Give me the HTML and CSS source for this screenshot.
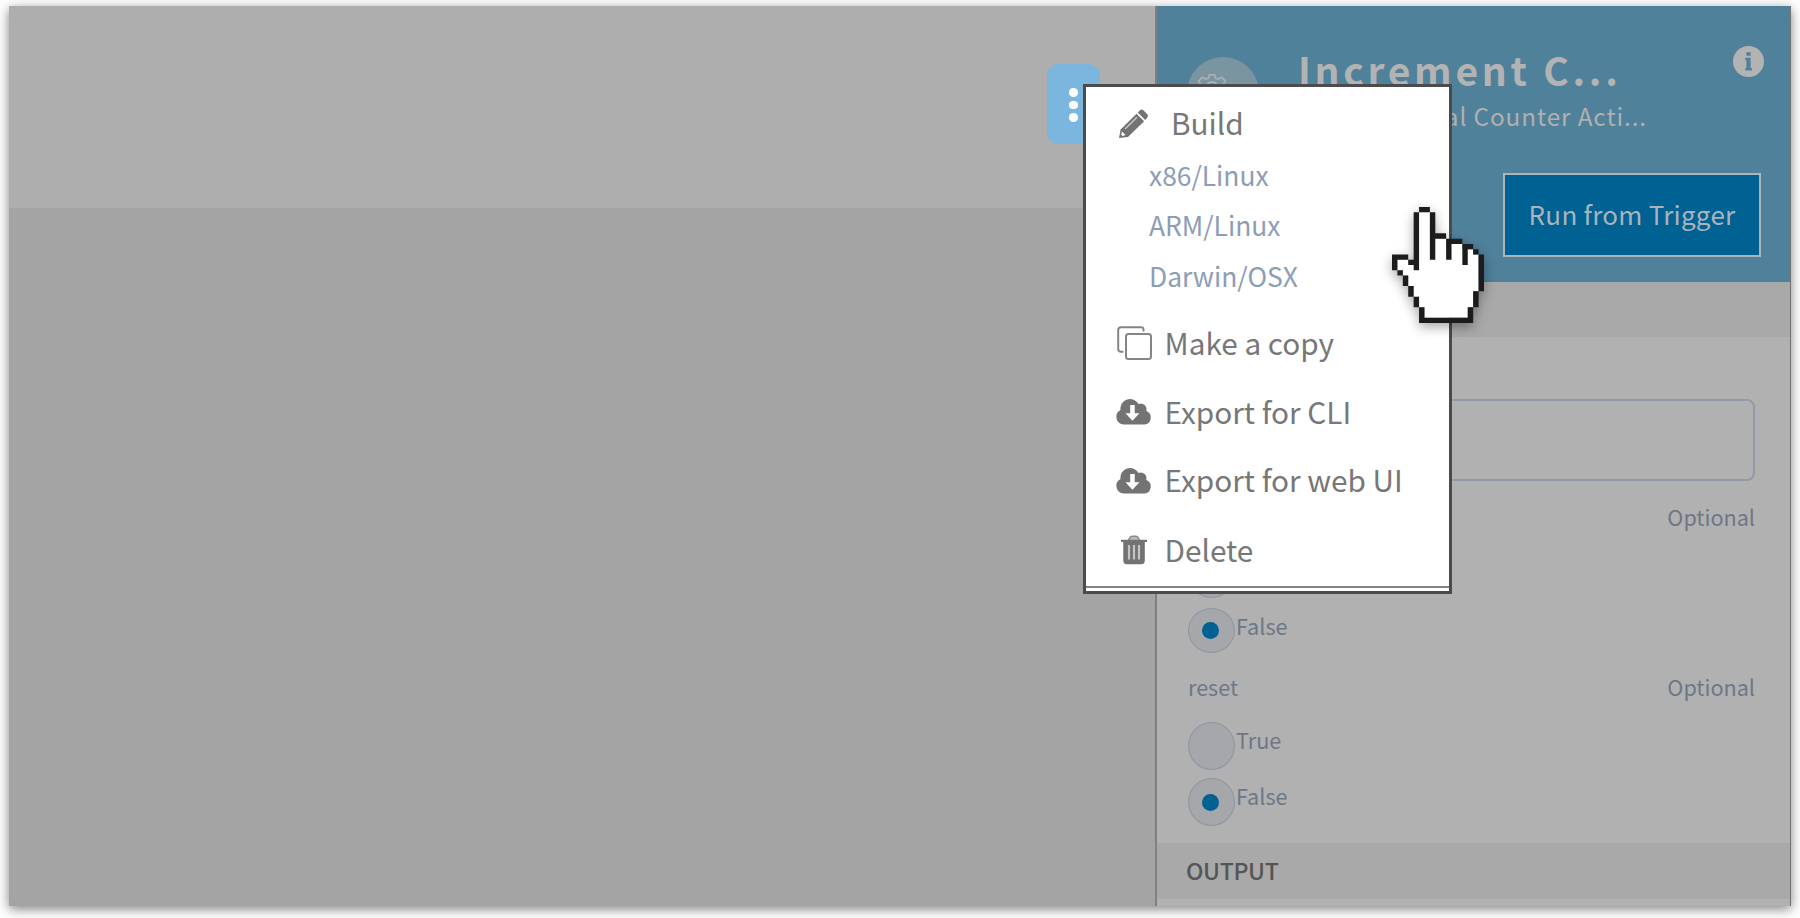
FILE: index.html
```html
<!DOCTYPE html>
<html lang="en">
<head>
<meta charset="utf-8">
<title>Increment Counter</title>
<link rel="stylesheet" href="styles.css">
</head>
<body>
<div class="frame">
  <main class="workspace">
    <div class="toolbar"></div>
    <div class="canvas"></div>
  </main>
  <aside class="panel">
    <header class="panel-head">
      <div class="avatar">
        <svg width="34" height="34" viewBox="0 0 34 34" fill="none" stroke="#a9b0b3" stroke-width="2">
          <path d="M14 2h6l1 4 3 1 4-2 4 4-2 4 1 3 4 1v6l-4 1-1 3 2 4-4 4-4-2-3 1-1 4h-6l-1-4-3-1-4 2-4-4 2-4-1-3-4-1v-6l4-1 1-3-2-4 4-4 4 2 3-1z" transform="translate(1 1) scale(.88)"/>
          <circle cx="16" cy="16" r="6"/>
        </svg>
      </div>
      <div class="heading">
        <h1 class="title">Increment C...</h1>
        <p class="subtitle">Global Counter Acti...</p>
      </div>
      <svg class="info" width="31" height="31" viewBox="0 0 31 31">
        <circle cx="15.5" cy="15.5" r="15.5" fill="#b3b3b3"/>
        <path d="M13.4 6.200h4.200v3.600h-4.200zM12.200 11.800h5.400v10.200h1.300v2.500h-6.700v-2.500h1.200v-7.700h-1.200z" fill="#50819b"/>
      </svg>
      <button class="run">Run from Trigger</button>
    </header>
    <div class="strip"></div>
    <section class="fields">
      <div class="input"></div>
      <div class="label first"><span></span><span>Optional</span></div>
      <div class="radio r1"><i class="knob"></i></div>
      <div class="radio r2"><i class="knob on"></i><span>False</span></div>
      <div class="label second"><span>reset</span><span>Optional</span></div>
      <div class="radio r3"><i class="knob"></i><span>True</span></div>
      <div class="radio r4"><i class="knob on"></i><span>False</span></div>
    </section>
    <div class="output">OUTPUT</div>
  </aside>
</div>

<div class="kebab"><i></i><i></i><i></i></div>

<nav class="menu">
  <div class="item build">
    <svg class="icon" width="35" height="30" viewBox="0 0 35 30">
      <path d="M3 29l1.600-8.600L20.500 4.700l7.600 7.600L12 28z" fill="#737373"/>
      <path d="M21.800 3.500l2.300-2.300q1.600-1.300 3.200 0l4 4q1.300 1.600 0 3.200L29.200 10.900z" fill="#737373"/>
      <path d="M9 20L21 8.200" stroke="#ccc" stroke-width="1.300" fill="none"/>
      <path d="M6 22.500l3.600 3.600-3 .9-1.500-1.500z" fill="#fff"/>
    </svg>
    <span>Build</span>
  </div>
  <div class="sub s1">x86/Linux</div>
  <div class="sub s2">ARM/Linux</div>
  <div class="sub s3">Darwin/OSX</div>
  <div class="item copy">
    <svg class="icon" width="35" height="34" viewBox="0 0 35 34" fill="none" stroke="#858585" stroke-width="2">
      <rect x="9" y="8" width="25" height="25" rx="2.500"/>
      <path d="M26.500 5.500V3.500Q26.500 1.200 24 1.200H4Q1.200 1.200 1.200 4V23Q1.200 25.700 4 25.700H6.500"/>
    </svg>
    <span>Make a copy</span>
  </div>
  <div class="item cli">
    <svg class="icon" width="35" height="27" viewBox="0 0 35 27"><path d="M7.700 26.500A7.700 7.700 0 0 1 4.500 12 9.700 9.700 0 0 1 22.600 6 5.700 5.700 0 0 1 30.200 13 7 7 0 0 1 28.500 26.500z" fill="#737373"/><path d="M14.200 7h4.500v8.300h4.800L16.400 22.700 9.500 15.300h4.700z" fill="#fff"/></svg>
    <span>Export for CLI</span>
  </div>
  <div class="item web">
    <svg class="icon" width="35" height="27" viewBox="0 0 35 27"><path d="M7.700 26.500A7.700 7.700 0 0 1 4.500 12 9.700 9.700 0 0 1 22.600 6 5.700 5.700 0 0 1 30.200 13 7 7 0 0 1 28.500 26.500z" fill="#737373"/><path d="M14.200 7h4.500v8.300h4.800L16.400 22.700 9.500 15.300h4.700z" fill="#fff"/></svg>
    <span>Export for web UI</span>
  </div>
  <div class="item delete">
    <svg class="icon" width="35" height="30" viewBox="0 0 35 30">
      <path d="M12.500 5l1.500-2.600q.7-1.200 2-1.200h4q1.300 0 2 1.200L23.500 5" fill="#bbb" stroke="#8a8a8a" stroke-width="1.500"/>
      <path d="M5 4.700h26v2.200H28.800V25.500Q28.800 29.200 25.500 29.200H10.500Q7.300 29.200 7.300 25.500V6.900H5z" fill="#737373"/>
      <path d="M13 10v14.500M18 10v14.500M23 10v14.500" stroke="#c4c4c4" stroke-width="2.200"/>
    </svg>
    <span>Delete</span>
  </div>
</nav>

<svg class="cursor" viewBox="0 0 17 22" preserveAspectRatio="none">
  <path fill="#fff" d="M5 1h2v5h3v1h3v1h2v1h1v7h-1v3h-1v2H6v-2H5v-2H4v-2H3v-2H2v-1H1v-2h2v1h2z"/>
  <path fill="#1c1c1c" d="M5 0h2v1H5zM4 1h1v11H4v-1H3v-1h1zM7 1h1v4h2v1H8v4H7zM10 6h3v1h-2v3h-1zM13 7h2v1h-1v3h-1zM15 8h1v1h-1zM16 9h1v7h-1zM15 16h1v3h-1zM14 19h1v3H5v-3h1v2h8zM4 17h1v2H4zM3 15h1v2H3zM2 13h1v2H2zM1 12h1v1H1zM0 9h3v1H1v2H0z"/>
</svg>
</body>
</html>
```

FILE: styles.css
```css
* { box-sizing: border-box; }

body {
  margin: 0;
  width: 1800px;
  height: 918px;
  overflow: hidden;
  padding: 6px 9px 12px;
  background: #fff;
  font-family: "Noto Sans CJK SC", "Noto Sans", sans-serif;
}

.frame {
  display: flex;
  width: 1782px;
  height: 900px;
  box-shadow: 0 3px 11px rgba(0, 0, 0, 0.5);
}

.workspace {
  display: flex;
  flex-direction: column;
  width: 1148px;
  border-right: 2px solid #808080;
}
.toolbar { height: 202px; background: #aeaeae; }
.canvas { flex: 1; background: #a4a4a4; }

.panel {
  width: 634px;
  background: #b1b1b1;
  border-right: 1px solid #737373;
}

.panel-head {
  display: grid;
  grid-template-columns: 72px 1fr 31px;
  grid-template-rows: 120px 84px;
  column-gap: 40px;
  height: 276px;
  padding: 38px 26px 0 30px;
  background: #50819b;
}
.avatar {
  width: 72px;
  height: 72px;
  margin-top: 13px;
  padding: 15px 0 0 9px;
  border-radius: 50%;
  background: #7a959f;
}
.heading { min-width: 0; white-space: nowrap; }
.title {
  margin: 1px 0 0 -1px;
  font-size: 39px;
  line-height: 48px;
  font-weight: 700;
  letter-spacing: 3.7px;
  color: #b3b3b3;
}
.subtitle {
  margin: 5px 0 0;
  width: 348px;
  text-align: right;
  font-size: 24.300px;
  line-height: 36px;
  letter-spacing: 0.9px;
  color: #b0b0b0;
}
.info { margin-top: 2px; }
.run {
  grid-column: 1 / 4;
  justify-self: end;
  width: 258px;
  height: 84px;
  margin: 9px 3px 0 0;
  padding: 0 0 3px;
  border: 2px solid #b0b4b8;
  background: #006193;
  color: #aab4ba;
  font-family: inherit;
  font-size: 26px;
  letter-spacing: 0.25px;
  white-space: nowrap;
}

.strip { height: 55px; background: #a9a9a9; }

.fields {
  height: 506px;
  padding: 62px 35px 0 31px;
  color: #6c7888;
  font-size: 21.600px;
}
.input {
  height: 82px;
  border: 2px solid #919aa6;
  border-radius: 8px;
}
.label {
  display: flex;
  justify-content: space-between;
  height: 36px;
  line-height: 38px;
}
.first { margin-top: 17px; }
.second { margin-top: 15px; }
.radio {
  display: flex;
  gap: 1px;
  height: 48px;
}
.radio span { line-height: 36px; }
.r1 { margin-top: 16px; }
.r2 { margin-top: 10px; height: 45px; }
.r3 { margin-top: 18px; }
.r4 { margin-top: 8px; }
.knob {
  display: flex;
  align-items: center;
  justify-content: center;
  width: 47px;
  height: 100%;
  border: 1.5px solid #8d96a1;
  border-radius: 50%;
  background: #a5a7ab;
}
.knob.on::after {
  content: "";
  width: 17px;
  height: 17px;
  margin-right: 2px;
  border-radius: 50%;
  background: #006193;
}

.output {
  height: 56px;
  padding-left: 29px;
  background: #a9a9a9;
  color: #555;
  font-size: 23.200px;
  font-weight: 500;
  letter-spacing: -0.4px;
  line-height: 55px;
}

.kebab {
  position: absolute;
  left: 1047px;
  top: 64px;
  display: flex;
  flex-direction: column;
  align-items: center;
  gap: 4px;
  width: 53px;
  height: 80px;
  padding-top: 24px;
  border-radius: 12px;
  background: #7ab6dd;
}
.kebab i {
  width: 8.500px;
  height: 8.500px;
  border-radius: 50%;
  background: #fff;
}

.menu {
  position: absolute;
  left: 1083px;
  top: 84px;
  width: 369px;
  height: 510px;
  padding: 9px 0 0;
  border: 3px solid #4b4b4b;
  background: #fff;
}
.menu::after {
  content: "";
  display: block;
  height: 2px;
  margin-top: 2px;
  background: #858585;
}
.item {
  display: flex;
  align-items: center;
  gap: 13.500px;
  padding-left: 30px;
  font-size: 29.750px;
  color: #777;
  white-space: nowrap;
}
.build { height: 51px; gap: 20px; }
.build .icon { margin-top: 4px; }
.copy { height: 70px; margin-top: 7px; }
.copy .icon { margin: 2px -1px 0 1px; }
.cli { height: 67px; }
.cli .icon { margin-top: 2px; }
.web { height: 70px; }
.web .icon { margin-top: 3px; }
.delete { height: 70px; }
.delete .icon { margin-top: 1px; }
.sub {
  height: 50px;
  padding-left: 63px;
  font-size: 26.400px;
  line-height: 50px;
  color: #8c9db5;
}
.s1 { margin-top: 3px; }
.s2 { line-height: 49px; }
.s3 { line-height: 51px; }

.cursor {
  position: absolute;
  left: 1392.3px;
  top: 207.3px;
  width: 92px;
  height: 116px;
  filter: drop-shadow(0 4px 6px rgba(0, 0, 0, 0.35));
}
```
